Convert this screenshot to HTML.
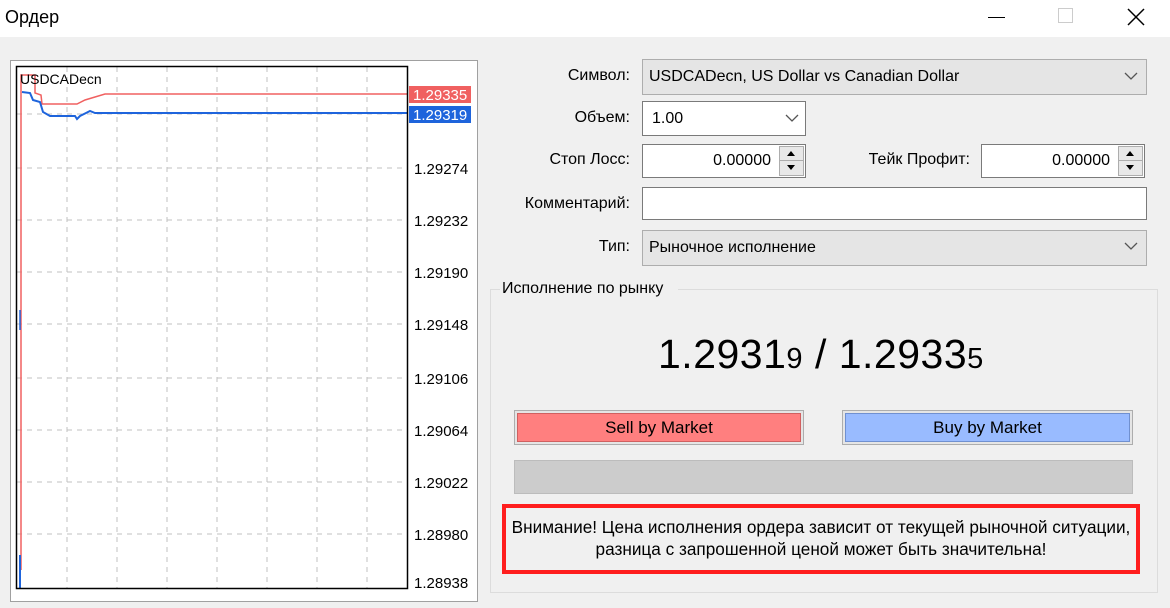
<!DOCTYPE html>
<html><head><meta charset="utf-8"><style>
*{margin:0;padding:0;box-sizing:border-box}
body{width:1170px;height:608px;background:#f0f0f0;font-family:"Liberation Sans","DejaVu Sans",sans-serif;position:relative;overflow:hidden;color:#000}
.a{position:absolute}
.lbl{position:absolute;font-size:16px;text-align:right;width:200px}
.box{position:absolute;background:#fff;border:1px solid #7a7a7a;font-size:16px}
.dd{position:absolute;background:#e5e5e5;border:1px solid #adadad;font-size:16px}
</style></head><body>
<div class="a" style="left:0;top:0;width:1170px;height:37px;background:#fff"></div>
<div class="a" style="left:5px;top:7px;font-size:18px">Ордер</div>
<div class="a" style="left:988px;top:17px;width:17px;height:1px;background:#000"></div>
<div class="a" style="left:1058px;top:8px;width:15px;height:15px;border:1px solid #ccc"></div>
<svg class="a" style="left:1127px;top:8px" width="18" height="18"><path d="M1 1L17 17M17 1L1 17" stroke="#000" stroke-width="1.5"/></svg>

<svg class="a" style="left:0;top:0" width="490" height="608">
<rect x="10.5" y="60.5" width="467" height="541" fill="#fff" stroke="#a0a0a0"/>
<g stroke="#c0c0c0" stroke-dasharray="5,5">
<line x1="67" y1="67" x2="67" y2="588"/><line x1="117" y1="67" x2="117" y2="588"/><line x1="167" y1="67" x2="167" y2="588"/><line x1="217" y1="67" x2="217" y2="588"/><line x1="267" y1="67" x2="267" y2="588"/><line x1="317" y1="67" x2="317" y2="588"/><line x1="367" y1="67" x2="367" y2="588"/>
<line x1="17" y1="114" x2="407" y2="114"/><line x1="17" y1="168" x2="407" y2="168"/><line x1="17" y1="220" x2="407" y2="220"/><line x1="17" y1="272" x2="407" y2="272"/><line x1="17" y1="324" x2="407" y2="324"/><line x1="17" y1="378" x2="407" y2="378"/><line x1="17" y1="430" x2="407" y2="430"/><line x1="17" y1="482" x2="407" y2="482"/><line x1="17" y1="534" x2="407" y2="534"/>
</g>
<polyline fill="none" stroke="#f06060" stroke-width="1.5" points="21,570 21,75 35,75 35,93 41,95 42,104 77,104 85,100 95,97 105,94 407,94"/>
<polyline fill="none" stroke="#1e64dc" stroke-width="2" points="22,92 30,93 33,100 40,102 43,112 50,116 75,116 77,119 80,116 86,113 90,111 95,113 100,113 407,113"/>
<line x1="20" y1="555" x2="20" y2="589" stroke="#1e64dc" stroke-width="2"/>
<line x1="20" y1="310" x2="20" y2="330" stroke="#1e64dc" stroke-width="1.5"/>
<rect x="16.5" y="66.5" width="391" height="522" fill="none" stroke="#000" stroke-width="1.5"/>
<rect x="409" y="86" width="62" height="17" fill="#f06060"/>
<rect x="409" y="106" width="62" height="17" fill="#1e64dc"/>
<g font-size="15" font-family="Liberation Sans,sans-serif">
<text x="20" y="84" font-size="14">USDCADecn</text>
<text x="413" y="100" fill="#fff">1.29335</text>
<text x="413" y="120" fill="#fff">1.29319</text>
<text x="414" y="174">1.29274</text><text x="414" y="226">1.29232</text><text x="414" y="278">1.29190</text><text x="414" y="330">1.29148</text><text x="414" y="384">1.29106</text><text x="414" y="436">1.29064</text><text x="414" y="488">1.29022</text><text x="414" y="540">1.28980</text><text x="414" y="588">1.28938</text>
</g>
</svg>

<div class="lbl" style="left:430px;top:67px">Символ:</div>
<div class="dd" style="left:642px;top:59px;width:505px;height:36px;padding:8px 6px">USDCADecn, US Dollar vs Canadian Dollar</div>
<div class="lbl" style="left:430px;top:109px">Объем:</div>
<div class="box" style="left:642px;top:101px;width:164px;height:35px;padding:8px 9px">1.00</div>
<div class="lbl" style="left:430px;top:151px">Стоп Лосс:</div>
<div class="box" style="left:642px;top:144px;width:164px;height:34px;padding:7px 34px 0 0;text-align:right">0.00000</div>
<div class="lbl" style="left:770px;top:151px">Тейк Профит:</div>
<div class="box" style="left:981px;top:144px;width:164px;height:34px;padding:7px 34px 0 0;text-align:right">0.00000</div>
<div class="lbl" style="left:430px;top:195px">Комментарий:</div>
<div class="box" style="left:642px;top:187px;width:505px;height:33px"></div>
<div class="lbl" style="left:430px;top:238px">Тип:</div>
<div class="dd" style="left:642px;top:230px;width:505px;height:36px;padding:8px 6px">Рыночное исполнение</div>
<svg class="a" style="left:0;top:0" width="1170" height="608">
<g fill="none" stroke="#555" stroke-width="1.3"><path d="M1125 73l6 6 6-6M1125 243l6 6 6-6M786 115l6 6 6-6"/></g>
<g fill="#e8e8e8" stroke="#adadad"><rect x="779.5" y="146.5" width="24" height="14"/><rect x="779.5" y="160.5" width="24" height="15"/><rect x="1118.5" y="146.5" width="24" height="14"/><rect x="1118.5" y="160.5" width="24" height="15"/></g>
<g fill="#000"><path d="M787 156l4-5 4 5zM787 165l4 5 4-5zM1126 156l4-5 4 5zM1126 165l4 5 4-5z"/></g>
<path d="M500 289.5H490.5V592.5H1157.5V289.5H678" fill="none" stroke="#dcdcdc"/>
</svg>
<div class="a" style="left:502px;top:280px;font-size:16px">Исполнение по рынку</div>
<div class="a" style="left:658px;top:331px;font-size:41px;white-space:nowrap;letter-spacing:0.5px">1.2931<span style="font-size:29px">9</span> / 1.2933<span style="font-size:29px">5</span></div>
<div class="a" style="left:514px;top:410px;width:290px;height:35px;border:1px solid #adadad;padding:2px;background:#e5e5e5"><div style="background:#ff7f7f;border:1px solid #d06060;height:100%;text-align:center;font-size:17px;line-height:27px">Sell by Market</div></div>
<div class="a" style="left:842px;top:410px;width:291px;height:35px;border:1px solid #adadad;padding:2px;background:#e5e5e5"><div style="background:#99bbff;border:1px solid #7090d0;height:100%;text-align:center;font-size:17px;line-height:27px">Buy by Market</div></div>
<div class="a" style="left:514px;top:460px;width:619px;height:34px;background:#cccccc;border:1px solid #bcbcbc"></div>
<div class="a" style="left:502px;top:504px;width:638px;height:70px;border:4px solid #ff1e1e;text-align:center;font-size:17.2px;line-height:22px;padding-top:8px;white-space:nowrap">Внимание! Цена исполнения ордера зависит от текущей рыночной ситуации,<br>разница с запрошенной ценой может быть значительна!</div>
</body></html>
